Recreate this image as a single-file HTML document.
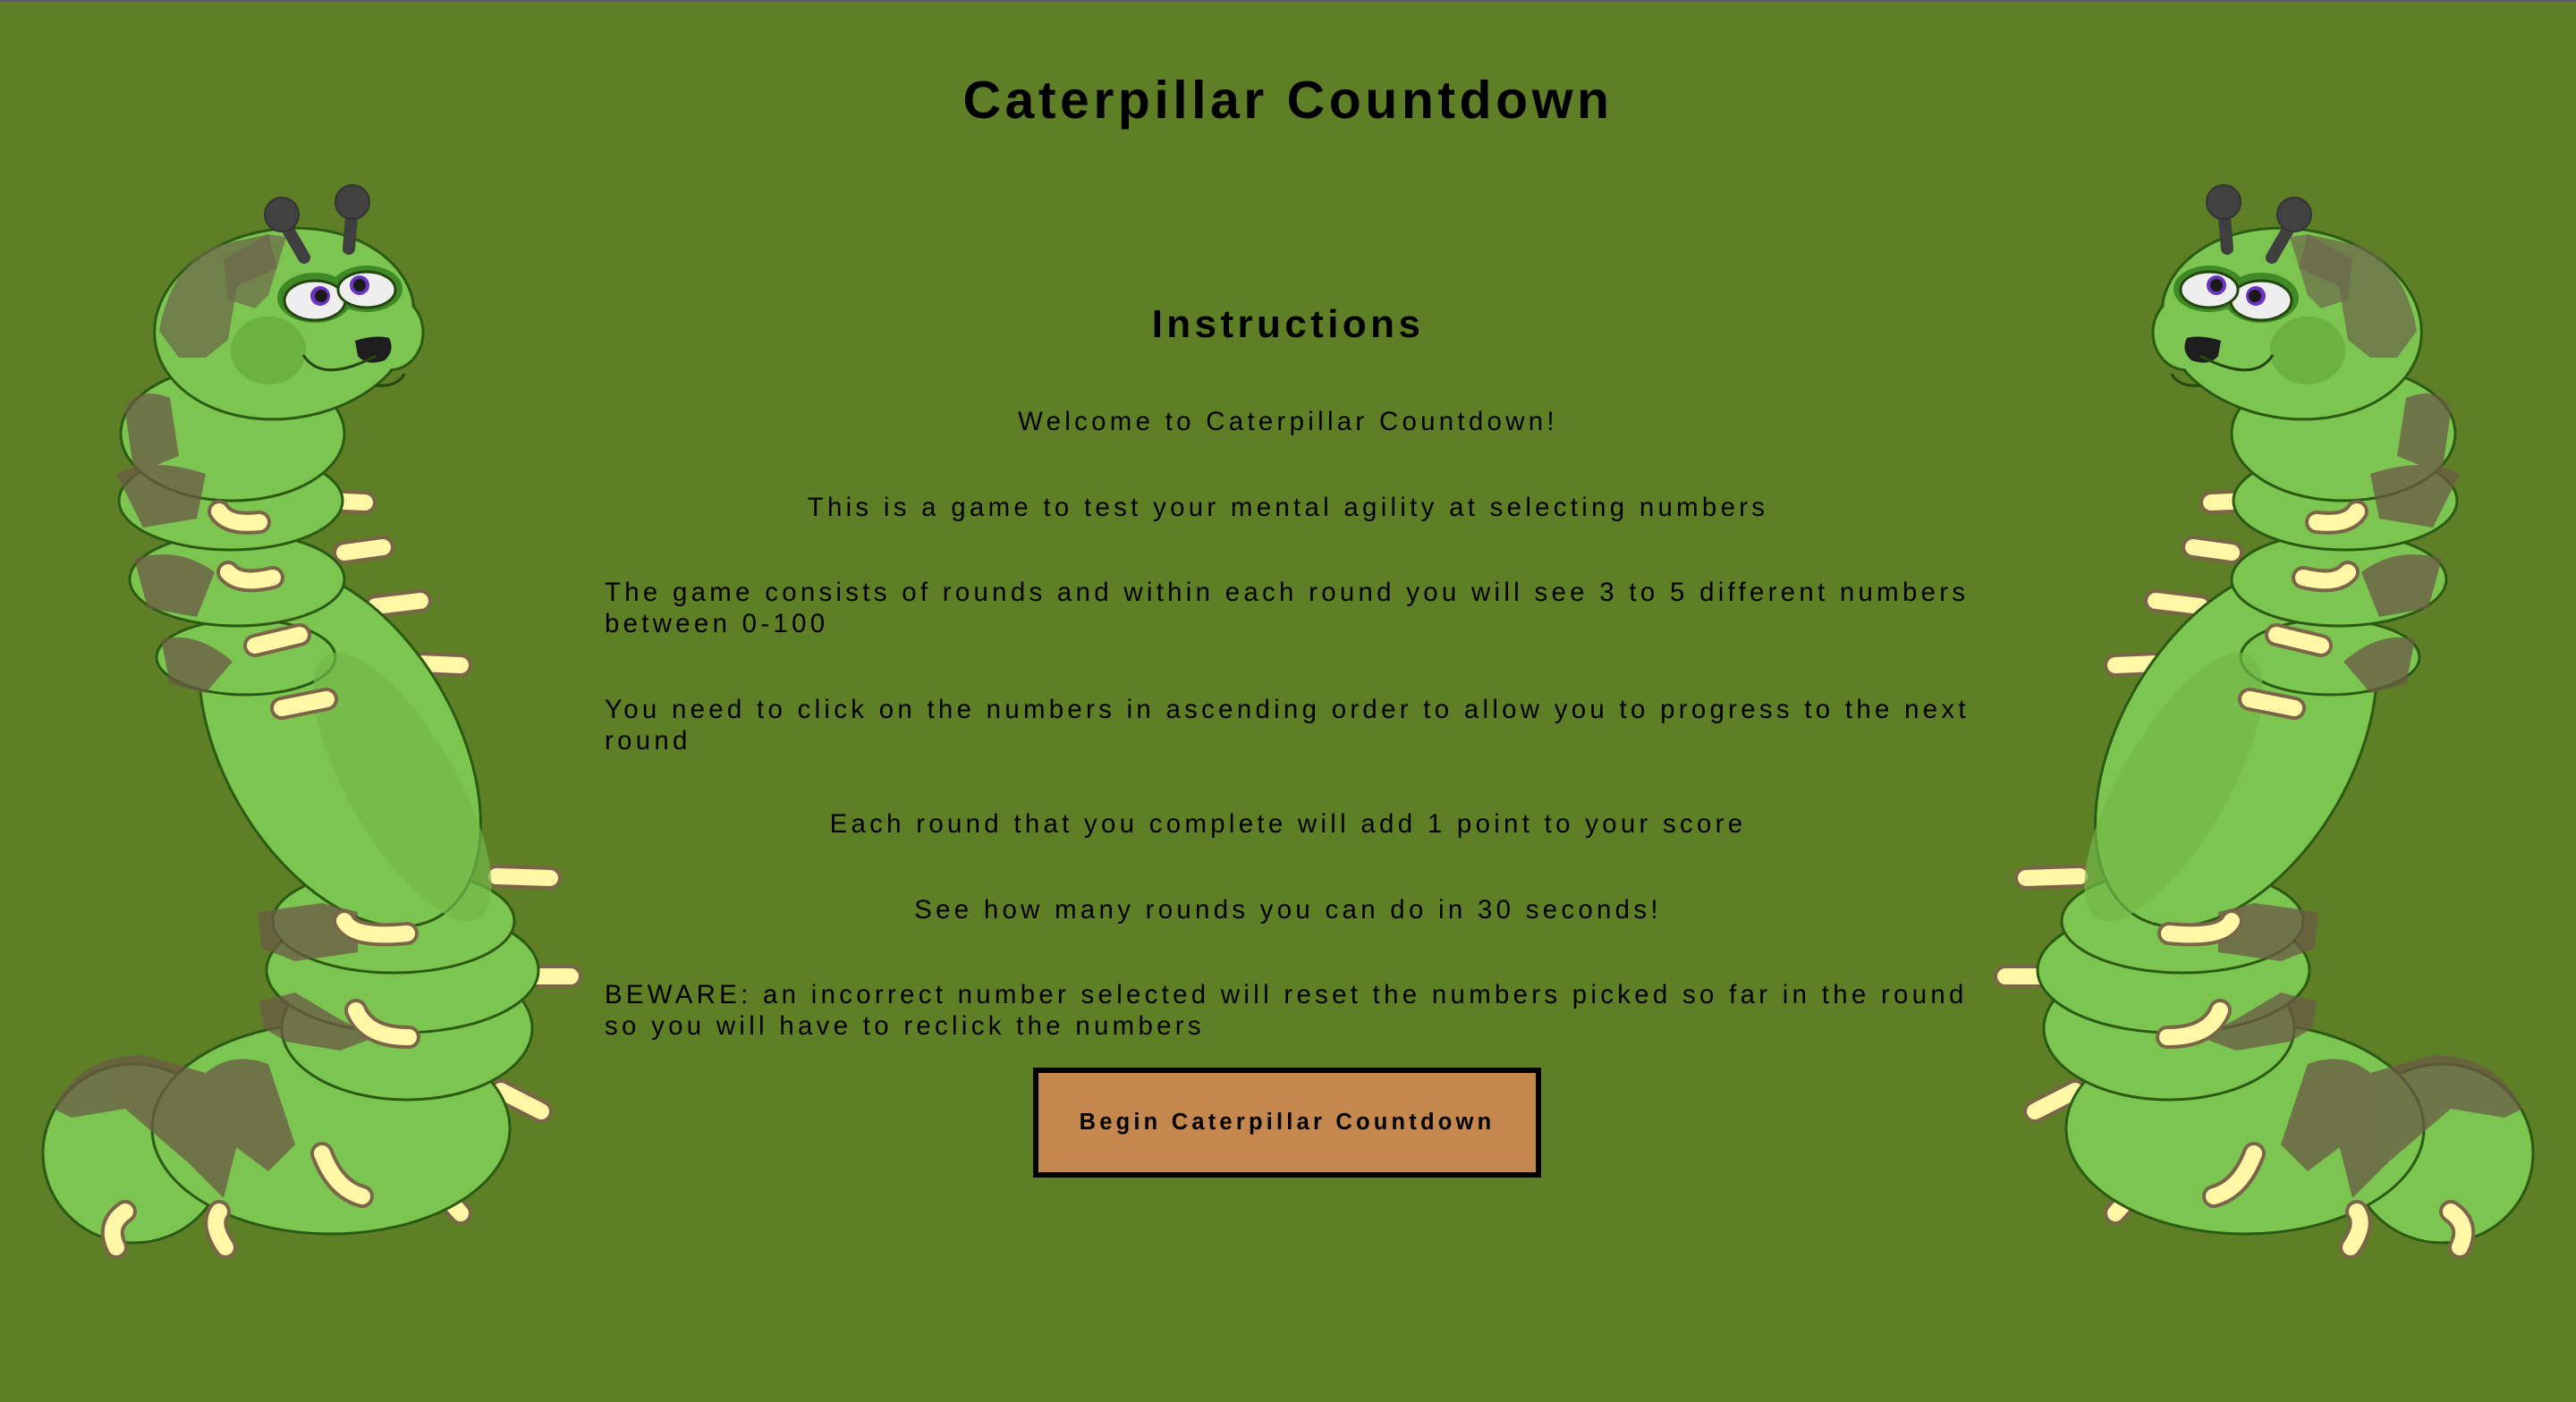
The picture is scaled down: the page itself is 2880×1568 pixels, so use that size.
<!DOCTYPE html>
<html><head><meta charset="utf-8">
<style>
html,body{margin:0;padding:0}
body{width:2880px;height:1568px;background:#5e7f26;position:relative;overflow:hidden;font-family:"Liberation Sans",Arial,sans-serif;color:#000}
.topline{position:absolute;left:0;top:0;width:2880px;height:2px;background:#5c5c68}
h1{position:absolute;left:0;width:2880px;top:77px;margin:0;text-align:center;font-size:59px;line-height:70px;font-weight:bold;letter-spacing:4.5px}
h2{position:absolute;left:0;width:2880px;top:338px;margin:0;text-align:center;font-size:44px;line-height:50px;font-weight:bold;letter-spacing:4.4px}
.p{position:absolute;left:676px;width:1540px;font-size:29.4px;line-height:35px;letter-spacing:4.3px;text-align:center}
.c{left:670px}
.l{text-align:left}
.btn{position:absolute;left:1155px;top:1194px;width:556px;height:111px;border:6px solid #000;background:#c4874d;text-align:center;font-weight:bold;font-size:25.5px;letter-spacing:4.2px;line-height:111px}
svg{position:absolute;top:0}
</style></head><body>
<div class="topline"></div>
<h1>Caterpillar Countdown</h1>
<h2>Instructions</h2>
<div class="p c" style="top:454px">Welcome to Caterpillar Countdown!</div>
<div class="p c" style="top:550px">This is a game to test your mental agility at selecting numbers</div>
<div class="p l" style="top:645px">The game consists of rounds and within each round you will see 3 to 5 different numbers between 0-100</div>
<div class="p l" style="top:776px">You need to click on the numbers in ascending order to allow you to progress to the next round</div>
<div class="p c" style="top:904px">Each round that you complete will add 1 point to your score</div>
<div class="p c" style="top:1000px">See how many rounds you can do in 30 seconds!</div>
<div class="p l" style="top:1095px">BEWARE: an incorrect number selected will reset the numbers picked so far in the round so you will have to reclick the numbers</div>
<div class="btn">Begin Caterpillar Countdown</div>

<svg width="0" height="0" style="position:absolute">
<defs>
<g id="cat">
  <g stroke-linecap="round" fill="none">
    <g stroke="#7a6548" stroke-width="26">
      <path d="M365 560 L408 562"/><path d="M385 618 L428 612"/><path d="M420 678 L470 672"/><path d="M468 742 L515 744"/>
      <path d="M555 980 L615 982"/><path d="M595 1092 L638 1092"/><path d="M560 1220 L605 1243"/><path d="M500 1340 L515 1357"/>
    </g>
    <g stroke="#fff6a6" stroke-width="18">
      <path d="M365 560 L408 562"/><path d="M385 618 L428 612"/><path d="M420 678 L470 672"/><path d="M468 742 L515 744"/>
      <path d="M555 980 L615 982"/><path d="M595 1092 L638 1092"/><path d="M560 1220 L605 1243"/><path d="M500 1340 L515 1357"/>
    </g>
  </g>
  <g fill="#7cc551" stroke="#2b5a12" stroke-width="3">
    <ellipse cx="150" cy="1290" rx="102" ry="100"/>
    <ellipse cx="370" cy="1262" rx="200" ry="118"/>
    <ellipse cx="455" cy="1150" rx="140" ry="80"/>
    <ellipse cx="450" cy="1085" rx="152" ry="70"/>
    <ellipse cx="440" cy="1030" rx="135" ry="58"/>
    <ellipse cx="380" cy="835" rx="130" ry="220" transform="rotate(-30 380 835)"/>
    <ellipse cx="275" cy="735" rx="100" ry="42"/>
    <ellipse cx="265" cy="648" rx="120" ry="52"/>
    <ellipse cx="258" cy="560" rx="125" ry="55"/>
    <ellipse cx="260" cy="485" rx="125" ry="75"/>
  </g>
  <ellipse cx="450" cy="880" rx="60" ry="170" transform="rotate(-30 450 880)" fill="#72b848" opacity="0.7"/>
  <g fill="#6a5a45" opacity="0.75">
    <path d="M288 1020 L360 1010 L400 1020 L400 1065 L330 1075 L292 1060 Z"/>
    <path d="M290 1120 L330 1110 L380 1140 L420 1160 L380 1175 L320 1165 L295 1150 Z"/>
    <path d="M60 1240 Q90 1180 160 1180 L230 1200 L270 1260 L250 1340 L210 1300 L140 1240 L80 1250 Z"/>
    <path d="M230 1200 Q260 1175 300 1190 L330 1280 L300 1310 L260 1280 Z"/>
    <path d="M140 460 Q150 430 190 445 L200 510 L150 530 Z"/>
    <path d="M130 530 Q170 510 230 530 L220 580 L160 590 Z"/>
    <path d="M150 625 Q200 610 240 640 L220 690 L165 680 Z"/>
    <path d="M180 715 Q220 705 260 740 L230 775 L190 765 Z"/>
  </g>
  <g stroke="#2b5a12" stroke-width="3" fill="#7cc551">
    <ellipse cx="318" cy="362" rx="146" ry="106" transform="rotate(-8 318 362)"/>
    <ellipse cx="435" cy="372" rx="38" ry="42"/>
  </g>
  <ellipse cx="318" cy="362" rx="144" ry="104" transform="rotate(-8 318 362)" fill="#7cc551"/>
  <path d="M178 370 Q190 300 240 275 L300 262 L310 300 L265 320 L255 380 L230 400 L200 400 Z" fill="#6b6848" opacity="0.75"/>
  <path d="M250 290 L300 262 L320 265 L300 330 L285 345 L255 335 Z" fill="#6b6848" opacity="0.7"/>
  <ellipse cx="300" cy="392" rx="42" ry="38" fill="#66ad3e" opacity="0.8"/>
  <g stroke="#3f3f3f" stroke-width="14" stroke-linecap="round"><path d="M318 250 L340 288"/><path d="M394 232 L390 278"/></g>
  <circle cx="315" cy="240" r="19" fill="#424242" stroke="#333" stroke-width="2"/>
  <circle cx="394" cy="226" r="19" fill="#424242" stroke="#333" stroke-width="2"/>
  <ellipse cx="352" cy="333" rx="42" ry="28" fill="#3f8a26"/>
  <ellipse cx="410" cy="323" rx="40" ry="26" fill="#3f8a26"/>
  <ellipse cx="352" cy="336" rx="34" ry="22" fill="#eeeeee" stroke="#23470e" stroke-width="3"/>
  <ellipse cx="410" cy="324" rx="32" ry="20" fill="#eeeeee" stroke="#23470e" stroke-width="3"/>
  <circle cx="358" cy="331" r="11" fill="#6a35c0"/><circle cx="359" cy="331" r="7" fill="#1a1a1a"/>
  <circle cx="402" cy="319" r="11" fill="#6a35c0"/><circle cx="402" cy="319" r="7" fill="#1a1a1a"/>
  <path d="M397 381 Q420 374 435 378 Q442 392 430 403 Q410 410 400 398 Z" fill="#1e1e1e"/>
  <path d="M339 397 Q360 430 420 398" fill="none" stroke="#23470e" stroke-width="3"/>
  <path d="M420 431 Q445 433 452 418" fill="none" stroke="#23470e" stroke-width="3"/>
  <g stroke-linecap="round" fill="none">
    <g stroke="#7a6548" stroke-width="26">
      <path d="M245 572 Q255 588 290 584"/><path d="M255 640 Q268 655 305 646"/><path d="M285 722 L335 710"/><path d="M315 792 L365 782"/>
      <path d="M385 1030 Q395 1050 455 1044"/><path d="M398 1130 Q410 1160 457 1160"/><path d="M360 1290 Q375 1330 405 1338"/>
      <path d="M140 1355 Q118 1370 130 1395"/><path d="M245 1355 Q235 1370 252 1395"/>
    </g>
    <g stroke="#fff6a6" stroke-width="18">
      <path d="M245 572 Q255 588 290 584"/><path d="M255 640 Q268 655 305 646"/><path d="M285 722 L335 710"/><path d="M315 792 L365 782"/>
      <path d="M385 1030 Q395 1050 455 1044"/><path d="M398 1130 Q410 1160 457 1160"/><path d="M360 1290 Q375 1330 405 1338"/>
      <path d="M140 1355 Q118 1370 130 1395"/><path d="M245 1355 Q235 1370 252 1395"/>
    </g>
  </g>
</g>
</defs>
</svg>
<svg width="700" height="1568" style="left:0" viewBox="0 0 700 1568"><use href="#cat"/></svg>
<svg width="700" height="1568" style="left:2180px" viewBox="0 0 700 1568"><g transform="translate(700 0) scale(-1 1)"><use href="#cat"/></g></svg>
</body></html>
